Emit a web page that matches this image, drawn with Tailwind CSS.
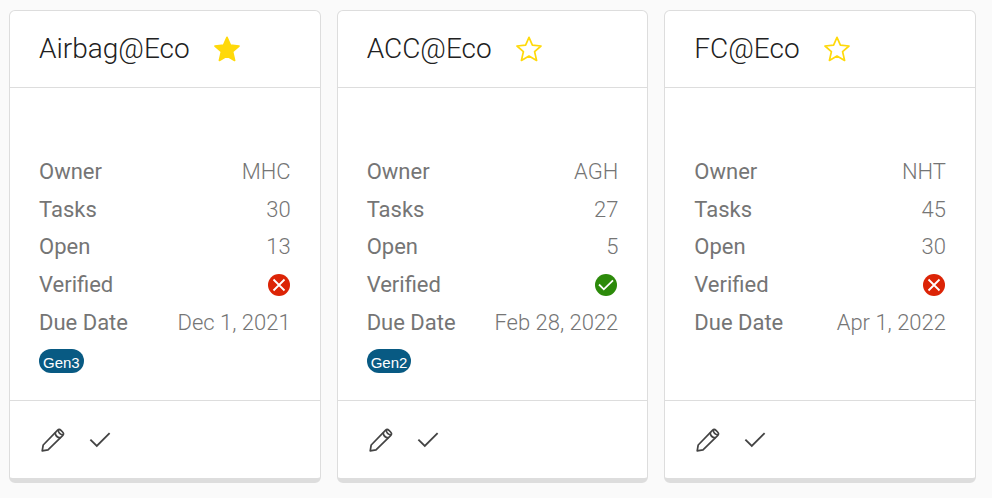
<!DOCTYPE html>
<html lang="en">
<head>
    <meta charset="UTF-8">
    <meta name="viewport" content="width=device-width, initial-scale=1.0">
    <title>Projects</title>
    <script src="https://cdn.jsdelivr.net/npm/@tailwindcss/browser@4"></script>
</head>
<body class="bg-[#fafafa] font-[Roboto,sans-serif]">
    <!-- Shared icons -->
    <svg class="hidden">
        <symbol id="icon-star" viewBox="0 0 26 26">
            <path d="M13 1.4 L16.4 9.2 L25 10 L18.6 15.7 L20.6 24.4 L13 20 L5.4 24.4 L7.4 15.7 L1 10 L9.6 9.2 Z" stroke="#ffd90a" stroke-width="1.7" stroke-linejoin="round" />
        </symbol>
        <symbol id="icon-rejected" viewBox="0 0 22 22">
            <circle cx="11" cy="11" r="11" fill="#dc2406" />
            <path d="M5.5 5.5 L16.5 16.5 M16.5 5.5 L5.5 16.5" fill="none" stroke="#fff" stroke-width="1.8" />
        </symbol>
        <symbol id="icon-verified" viewBox="0 0 22 22">
            <circle cx="11" cy="11" r="11" fill="#2c8a0a" />
            <path d="M4 10.5 L8.8 15.3 L18 6.3" fill="none" stroke="#fff" stroke-width="1.8" />
        </symbol>
        <symbol id="icon-edit" viewBox="0 0 24 24">
            <g fill="none" stroke="#444" stroke-width="1.7" stroke-linejoin="round">
                <path d="M1.2 22.8 L2.2 17 L16.4 2.4 Q18.2 0.6 20 2.4 L21.6 4 Q23.4 5.8 21.6 7.6 L7 21.8 Z" />
                <path d="M14.2 4.6 Q14.4 9.4 19.4 9.8 M17.2 2 Q17.6 6.4 22 6.8" />
            </g>
        </symbol>
        <symbol id="icon-done" viewBox="0 0 24 24">
            <path d="M1.5 11.5 L8.5 18.5 L22.5 4.5" fill="none" stroke="#444" stroke-width="2" />
        </symbol>
    </svg>

    <main class="grid grid-cols-3 gap-4 pt-[10px] pr-4 pb-4 pl-[9px]">
        <article class="flex flex-col rounded-md border border-b-[5px] border-[#dddddd] bg-white">
            <header class="flex h-[77px] items-center gap-6 border-b border-[#dddddd] px-[29px]">
                <h2 class="text-[28px] font-light text-[#212121]">Airbag@Eco</h2>
                <button type="button" aria-label="Remove from favourites">
                    <svg class="size-[26px] fill-[#ffd90a]"><use href="#icon-star" /></svg>
                </button>
            </header>
            <div class="h-[313px] border-b border-[#dddddd] px-[29px] pt-[65px]">
                <dl class="grid h-[188px] grid-cols-[auto_1fr] grid-rows-5 items-center text-[22px] font-light text-[#757575]">
                    <dt class="font-normal">Owner</dt>
                    <dd class="text-right">MHC</dd>
                    <dt class="font-normal">Tasks</dt>
                    <dd class="text-right">30</dd>
                    <dt class="font-normal">Open</dt>
                    <dd class="text-right">13</dd>
                    <dt class="font-normal">Verified</dt>
                    <dd class="flex justify-end pr-px"><svg class="size-[22px]" role="img" aria-label="No"><use href="#icon-rejected" /></svg></dd>
                    <dt class="font-normal">Due Date</dt>
                    <dd class="text-right">Dec 1, 2021</dd>
                </dl>
                <span class="mt-2 inline-flex h-6 items-center rounded-full bg-[#085a83] px-1 pt-1 font-['Liberation_Sans',sans-serif] text-[15px] text-white">Gen3</span>
            </div>
            <footer class="flex h-[77px] items-center gap-6 px-[31px]">
                <button type="button" aria-label="Edit"><svg class="size-6"><use href="#icon-edit" /></svg></button>
                <button type="button" aria-label="Mark as done"><svg class="size-[22px]"><use href="#icon-done" /></svg></button>
            </footer>
        </article>

        <article class="flex flex-col rounded-md border border-b-[5px] border-[#dddddd] bg-white">
            <header class="flex h-[77px] items-center gap-6 border-b border-[#dddddd] px-[29px]">
                <h2 class="text-[28px] font-light text-[#212121]">ACC@Eco</h2>
                <button type="button" aria-label="Add to favourites">
                    <svg class="size-[26px] fill-none"><use href="#icon-star" /></svg>
                </button>
            </header>
            <div class="h-[313px] border-b border-[#dddddd] px-[29px] pt-[65px]">
                <dl class="grid h-[188px] grid-cols-[auto_1fr] grid-rows-5 items-center text-[22px] font-light text-[#757575]">
                    <dt class="font-normal">Owner</dt>
                    <dd class="text-right">AGH</dd>
                    <dt class="font-normal">Tasks</dt>
                    <dd class="text-right">27</dd>
                    <dt class="font-normal">Open</dt>
                    <dd class="text-right">5</dd>
                    <dt class="font-normal">Verified</dt>
                    <dd class="flex justify-end pr-px"><svg class="size-[22px]" role="img" aria-label="Yes"><use href="#icon-verified" /></svg></dd>
                    <dt class="font-normal">Due Date</dt>
                    <dd class="text-right">Feb 28, 2022</dd>
                </dl>
                <span class="mt-2 inline-flex h-6 items-center rounded-full bg-[#085a83] px-1 pt-1 font-['Liberation_Sans',sans-serif] text-[15px] text-white">Gen2</span>
            </div>
            <footer class="flex h-[77px] items-center gap-6 px-[31px]">
                <button type="button" aria-label="Edit"><svg class="size-6"><use href="#icon-edit" /></svg></button>
                <button type="button" aria-label="Mark as done"><svg class="size-[22px]"><use href="#icon-done" /></svg></button>
            </footer>
        </article>

        <article class="flex flex-col rounded-md border border-b-[5px] border-[#dddddd] bg-white">
            <header class="flex h-[77px] items-center gap-6 border-b border-[#dddddd] px-[29px]">
                <h2 class="text-[28px] font-light text-[#212121]">FC@Eco</h2>
                <button type="button" aria-label="Add to favourites">
                    <svg class="size-[26px] fill-none"><use href="#icon-star" /></svg>
                </button>
            </header>
            <div class="h-[313px] border-b border-[#dddddd] px-[29px] pt-[65px]">
                <dl class="grid h-[188px] grid-cols-[auto_1fr] grid-rows-5 items-center text-[22px] font-light text-[#757575]">
                    <dt class="font-normal">Owner</dt>
                    <dd class="text-right">NHT</dd>
                    <dt class="font-normal">Tasks</dt>
                    <dd class="text-right">45</dd>
                    <dt class="font-normal">Open</dt>
                    <dd class="text-right">30</dd>
                    <dt class="font-normal">Verified</dt>
                    <dd class="flex justify-end pr-px"><svg class="size-[22px]" role="img" aria-label="No"><use href="#icon-rejected" /></svg></dd>
                    <dt class="font-normal">Due Date</dt>
                    <dd class="text-right">Apr 1, 2022</dd>
                </dl>
            </div>
            <footer class="flex h-[77px] items-center gap-6 px-[31px]">
                <button type="button" aria-label="Edit"><svg class="size-6"><use href="#icon-edit" /></svg></button>
                <button type="button" aria-label="Mark as done"><svg class="size-[22px]"><use href="#icon-done" /></svg></button>
            </footer>
        </article>
    </main>
</body>
</html>
